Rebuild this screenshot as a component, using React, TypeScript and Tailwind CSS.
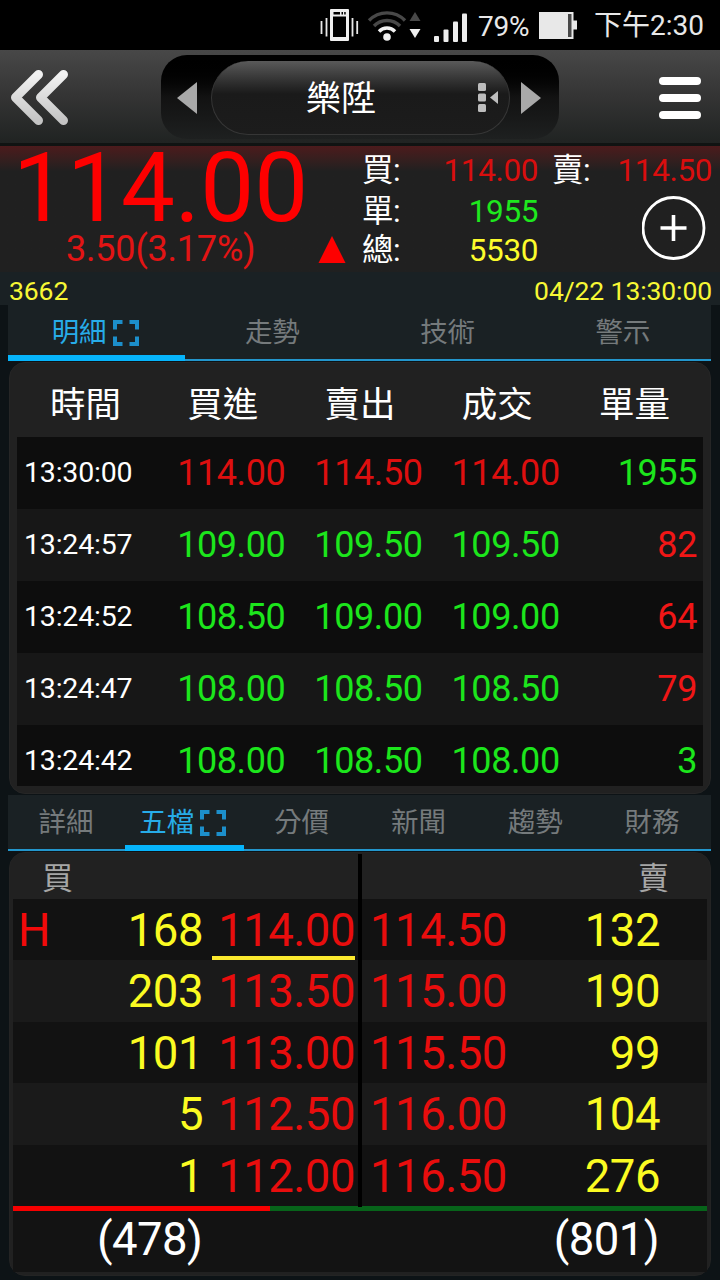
import clsx from "clsx";

interface Tick {
  time: string;
  bid: string;
  ask: string;
  price: string;
  volume: string;
  limit?: boolean;
  volumeUp?: boolean;
}

interface Level {
  flag?: string;
  bidQty: string;
  bid: string;
  ask: string;
  askQty: string;
}

const ticks: Tick[] = [
  { time: "13:30:00", bid: "114.00", ask: "114.50", price: "114.00", volume: "1955", limit: true },
  { time: "13:24:57", bid: "109.00", ask: "109.50", price: "109.50", volume: "82", volumeUp: true },
  { time: "13:24:52", bid: "108.50", ask: "109.00", price: "109.00", volume: "64", volumeUp: true },
  { time: "13:24:47", bid: "108.00", ask: "108.50", price: "108.50", volume: "79", volumeUp: true },
  { time: "13:24:42", bid: "108.00", ask: "108.50", price: "108.00", volume: "3" },
];

const levels: Level[] = [
  { flag: "H", bidQty: "168", bid: "114.00", ask: "114.50", askQty: "132" },
  { bidQty: "203", bid: "113.50", ask: "115.00", askQty: "190" },
  { bidQty: "101", bid: "113.00", ask: "115.50", askQty: "99" },
  { bidQty: "5", bid: "112.50", ask: "116.00", askQty: "104" },
  { bidQty: "1", bid: "112.00", ask: "116.50", askQty: "276" },
];

const bidTotal = 478;
const askTotal = 801;

function StatusBar() {
  return (
    <div className="flex h-[50px] items-center bg-black text-[#e8e8e8]">
      <svg className="ml-[318px] h-[50px] w-[156px] shrink-0" viewBox="318 0 156 50">
        {/* vibrate */}
        <path
          d="M321.5 21v13M326.5 18v18.5M352.5 18v18.5M357.2 21v13"
          stroke="#e8e8e8"
          strokeWidth="1.8"
        />
        <path
          fillRule="evenodd"
          fill="#f0f0f0"
          d="M331 9h17a1 1 0 0 1 1 1v30a1 1 0 0 1-1 1h-17a1 1 0 0 1-1-1V10a1 1 0 0 1 1-1zM333 16.500v20.500h13V16.500zM333.500 12v2.500h6.500V12zM341.500 12v2.500h1.500V12zM344.200 12v2.500h1.500V12z"
        />
        {/* wifi */}
        <g fill="none" strokeWidth="3.4">
          <path d="M369 20.500a25 25 0 0 1 36 0" stroke="#484848" />
          <path d="M374 26a18 18 0 0 1 26 0" stroke="#484848" />
          <path d="M379 31.500a11 11 0 0 1 16 0" stroke="#f0f0f0" />
        </g>
        <circle cx="387" cy="37" r="3.800" fill="#f0f0f0" />
        <path d="M415 12l5.500 9h-11z" fill="#484848" />
        <path d="M415 38l5.500-9h-11z" fill="#f0f0f0" />
        {/* signal */}
        <g fill="#ececec">
          <rect x="434" y="36" width="5" height="6" rx="1" />
          <rect x="443.500" y="29.500" width="5" height="12.500" rx="1" />
          <rect x="453" y="21.500" width="5" height="20.500" rx="1" />
          <rect x="462" y="13.500" width="5" height="28.500" rx="1" />
        </g>
      </svg>
      <span className="ml-[4px] w-[64px] pt-[3px] text-[28px] leading-none whitespace-nowrap tracking-[-0.2px]">
        79%
      </span>
      <svg className="-ml-[4px] h-[50px] w-[40px] shrink-0" viewBox="538 0 40 50">
        <path d="M539 12h34.500v8.500h3.500v9h-3.500V39H539z" fill="#e8e8e8" />
        <path d="M568 14h3.500v23H568z" fill="#484848" />
      </svg>
      <span className="mr-4 ml-auto pt-[2px] text-[28px] leading-none whitespace-nowrap">
        下午2:30
      </span>
    </div>
  );
}

function Header() {
  return (
    <div className="flex h-24 items-center border-b-[3px] border-[#101312] bg-linear-to-b from-[#484848] via-[#343434] to-[#202322] pr-[19px] pl-[9px]">
      <svg className="mt-px h-[60px] w-[62px]" viewBox="9 68 62 60">
        <defs>
          <linearGradient id="chev" x1="0" y1="0" x2="0" y2="1">
            <stop offset="0" stopColor="#f2f2f2" />
            <stop offset="1" stopColor="#c4c4c4" />
          </linearGradient>
        </defs>
        <path
          d="M38.500 75.500L15.500 98.500L38.500 121.500M63.500 75.500L40.500 98.500L63.500 121.500"
          fill="none"
          stroke="url(#chev)"
          strokeWidth="9"
          strokeLinecap="round"
          strokeLinejoin="round"
        />
      </svg>
      <div className="mt-[1px] ml-[90px] flex h-[84px] w-[398px] items-center rounded-[26px] bg-linear-to-b from-black via-[#121212] to-[#1e2020] px-4 pt-[2px]">
        <svg className="h-8 w-5" viewBox="0 0 20 32">
          <path d="M0 16L20 0V32z" fill="#a9a9a9" />
        </svg>
        <div className="ml-[14px] flex h-[74px] w-[299px] items-center rounded-full border border-t-0 border-[#363636] bg-linear-to-b from-[#5a5a5a] via-[#1a1a1a] via-45% to-[#1c1c1c] pr-[10px] pl-[94px]">
          <span className="pt-[4px] text-[35px] leading-none whitespace-nowrap text-white">樂陞</span>
          <svg className="ml-auto h-[30px] w-[21px]" viewBox="0 0 21 30">
            <g fill="#bdbdbd">
              <rect x="0" y="0" width="8" height="8" rx="1.500" />
              <rect x="0" y="10.500" width="8" height="8" rx="1.500" />
              <rect x="0" y="21" width="8" height="8" rx="1.500" />
              <path d="M12 14.500L20 8v13z" />
            </g>
          </svg>
        </div>
        <svg className="ml-[11px] h-8 w-5" viewBox="0 0 20 32">
          <path d="M20 16L0 0V32z" fill="#a9a9a9" />
        </svg>
      </div>
      <div className="mt-[3px] ml-auto flex flex-col gap-[9px]">
        <div className="h-2 w-[42px] rounded-full bg-white" />
        <div className="h-2 w-[42px] rounded-full bg-white" />
        <div className="h-2 w-[42px] rounded-full bg-white" />
      </div>
    </div>
  );
}

function Quote() {
  return (
    <div>
      <div className="flex h-[126px] bg-[#202020] bg-linear-to-b from-[#4c1a1c] to-[#202020] to-20%">
        <div className="w-[362px] pl-[13px]">
          <div className="h-[85px] text-[96px] leading-[84px] whitespace-nowrap text-[#fe0000]">
            114.00
          </div>
          <div className="flex h-9 items-center">
            <span className="ml-[53px] text-[36px] leading-9 whitespace-nowrap tracking-[-0.2px] text-[#e31414]">
              3.50(3.17%)
            </span>
            <svg className="ml-auto mr-4 h-[27px] w-7" viewBox="0 0 28 27">
              <path d="M14 0L27.500 27H0.500z" fill="#fe0000" />
            </svg>
          </div>
        </div>
        <div className="grid w-[176px] grid-cols-[40px_1fr] grid-rows-[41px_42px_36px] items-center pt-[4px] text-[31.5px] leading-none tracking-[-0.4px]">
          <span className="text-white">買:</span>
          <span className="text-right text-[#d90e0e]">114.00</span>
          <span className="text-white">單:</span>
          <span className="text-right text-[#1ee81e]">1955</span>
          <span className="text-white">總:</span>
          <span className="text-right text-[#fcfc2c]">5530</span>
        </div>
        <div className="flex flex-1 flex-col items-end pt-[4px] pr-[8px] pl-[14px]">
          <div className="flex h-[41px] w-full items-center justify-between text-[31.5px] leading-none tracking-[-0.4px]">
            <span className="text-white">賣:</span>
            <span className="text-[#d90e0e]">114.50</span>
          </div>
          <svg className="mt-[5px] mr-[6px] h-16 w-16" viewBox="0 0 64 64">
            <circle cx="31.500" cy="32" r="30.500" fill="none" stroke="#fff" strokeWidth="2.800" />
            <path d="M31.500 19v26M18.500 32h26" stroke="#fff" strokeWidth="3.600" />
          </svg>
        </div>
      </div>
      <div className="flex h-[33px] items-center justify-between bg-[#1a2124] pt-[6px] pr-[8px] pl-[9px] text-[26.5px] leading-none tracking-[-0.1px] text-[#f7f735]">
        <span>3662</span>
        <span>04/22 13:30:00</span>
      </div>
    </div>
  );
}

function ExpandIcon() {
  return (
    <svg className="ml-[6px] h-[26px] w-[26px]" viewBox="0 0 26 26">
      <path
        d="M2 9.500V2h7.500M16.500 2H24v7.500M24 16.500V24h-7.500M9.500 24H2v-7.500"
        fill="none"
        stroke="#1c8fcb"
        strokeWidth="4"
      />
    </svg>
  );
}

function Tabs({ items, active }: { items: string[]; active: string }) {
  return (
    <div className="mr-[9px] ml-[8px] flex h-14 bg-[#1a2124]">
      {items.map((item) => (
        <div
          key={item}
          className={clsx(
            "flex w-0 flex-1 items-center justify-center text-[27.5px] leading-none",
            item === active
              ? "border-b-[6px] border-[#06b4fb] pt-[6px] pr-[3px] text-[#27ace8]"
              : "border-b-[2px] border-[#2396cc] pt-[2px] pr-px text-[#757a7c]"
          )}
        >
          <span>{item}</span>
          {item === active && <ExpandIcon />}
        </div>
      ))}
    </div>
  );
}

function TickTable() {
  return (
    <div className="mx-[9px] mt-[1px] h-[432px] rounded-2xl border border-[#262626] bg-[#212121] px-[7px] pb-[7px]">
      <div className="grid h-[74px] grid-cols-5 items-center pt-[12px] text-center text-[35.5px] leading-none text-white">
        <span>時間</span>
        <span>買進</span>
        <span>賣出</span>
        <span>成交</span>
        <span>單量</span>
      </div>
      <div className="h-[349px] overflow-hidden">
        {ticks.map((tick) => (
          <div
            key={tick.time}
            className={clsx(
              "grid h-[72px] grid-cols-5 items-center text-right text-[36px] leading-none tracking-[-0.4px] odd:bg-[#0d0d0d] even:bg-[#171717]",
              tick.limit ? "text-[#dd0f0f]" : "text-[#1ce61c]"
            )}
          >
            <span className="pt-px pl-[7px] text-left text-[28.5px] tracking-[-0.2px] text-white">
              {tick.time}
            </span>
            <span className="pr-[6px]">{tick.bid}</span>
            <span className="pr-[6px]">{tick.ask}</span>
            <span className="pr-[6px]">{tick.price}</span>
            <span
              className={clsx("pr-[6px]", tick.volumeUp ? "text-[#f01616]" : "text-[#1ce61c]")}
            >
              {tick.volume}
            </span>
          </div>
        ))}
      </div>
    </div>
  );
}

function OrderBook() {
  const bidShare = Math.floor((bidTotal / (bidTotal + askTotal)) * 100);

  return (
    <div className="relative mx-[9px] mt-[1px] h-[424px] rounded-2xl border border-[#242424] bg-[#212121] px-[3px]">
      <div className="flex h-[46px] items-center justify-between pt-[5px] pr-[38px] pl-[29px] text-[31px] leading-none text-[#a6a6a6]">
        <span>買</span>
        <span>賣</span>
      </div>
      {levels.map((level, i) => (
        <div
          key={level.bid}
          className="flex h-[61.4px] items-center text-[45.5px] leading-none tracking-[-0.5px] odd:bg-[#1a1a1a] even:bg-[#121212]"
        >
          <span className="w-[60px] pt-[2px] pl-[5px] text-[#f30a0a]">{level.flag}</span>
          <span className="w-[130px] pt-[2px] text-right text-[#fbfb22]">{level.bidQty}</span>
          <span
            className={clsx(
              "ml-[9px] h-full w-[143px] border-b-4 pt-[9px] text-right text-[#e80d0d]",
              i === 0 ? "border-[#fbe92e]" : "border-transparent"
            )}
          >
            {level.bid}
          </span>
          <span className="ml-[15px] w-[150px] pt-[2px] text-[#e80d0d]">{level.ask}</span>
          <span className="w-[140px] pt-[2px] text-right text-[#fbfb22]">{level.askQty}</span>
        </div>
      ))}
      <div className="flex h-[5px] bg-[#07641a]">
        <div className="bg-[#f70000]" style={{ width: `${bidShare}%` }} />
      </div>
      <div className="flex h-[61px] items-center justify-between bg-[#131313] pr-[48px] pb-[4px] pl-[84px] text-[45.5px] leading-none tracking-[-0.6px] text-white">
        <span>({bidTotal})</span>
        <span>({askTotal})</span>
      </div>
      {/* divider between bid and ask sides */}
      <div className="absolute top-[1px] left-[348px] h-[353px] w-1 bg-black" />
    </div>
  );
}

export default function App() {
  return (
    <div className="h-[1280px] w-[720px] overflow-hidden bg-[#0d1316] font-['Roboto','Noto_Sans_CJK_TC',sans-serif]">
      <StatusBar />
      <Header />
      <Quote />
      <Tabs items={["明細", "走勢", "技術", "警示"]} active="明細" />
      <TickTable />
      <div className="h-[1px]" />
      <Tabs items={["詳細", "五檔", "分價", "新聞", "趨勢", "財務"]} active="五檔" />
      <OrderBook />
    </div>
  );
}
